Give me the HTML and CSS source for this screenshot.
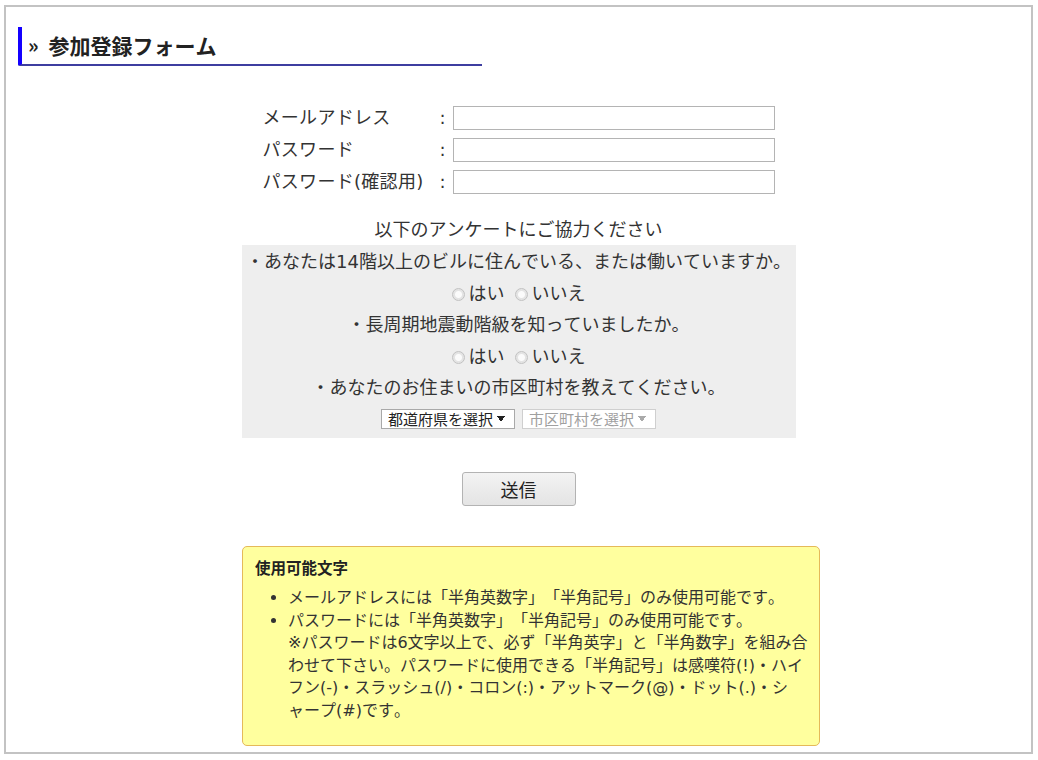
FILE: index.html
```html
<!DOCTYPE html>
<html lang="ja">
<head>
<meta charset="utf-8">
<title>参加登録フォーム</title>
<link rel="stylesheet" href="styles.css">
</head>
<body>
<div class="frame">
  <h2 class="heading"><span class="quote">»</span>参加登録フォーム</h2>

  <form class="form">
    <div class="fields">
      <label class="label" for="email">メールアドレス</label><span class="colon">:</span><input class="text" id="email" type="text">
      <label class="label" for="pw">パスワード</label><span class="colon">:</span><input class="text" id="pw" type="password">
      <label class="label" for="pw2">パスワード(確認用)</label><span class="colon">:</span><input class="text" id="pw2" type="password">
    </div>

    <p class="survey-title">以下のアンケートにご協力ください</p>
    <div class="survey">
      <p class="line">・あなたは14階以上のビルに住んでいる、または働いていますか。</p>
      <p class="line"><label class="opt"><input class="radio" type="radio" name="q1">はい</label><label class="opt"><input class="radio" type="radio" name="q1">いいえ</label></p>
      <p class="line">・長周期地震動階級を知っていましたか。</p>
      <p class="line"><label class="opt"><input class="radio" type="radio" name="q2">はい</label><label class="opt"><input class="radio" type="radio" name="q2">いいえ</label></p>
      <p class="line">・あなたのお住まいの市区町村を教えてください。</p>
      <p class="line selects">
        <select class="select"><option>都道府県を選択</option></select>
        <select class="select disabled" disabled><option>市区町村を選択</option></select>
      </p>
    </div>

    <div class="actions"><button class="submit" type="button">送信</button></div>
  </form>

  <div class="note">
    <p class="note-title">使用可能文字</p>
    <ul class="note-list">
      <li>メールアドレスには「半角英数字」「半角記号」のみ使用可能です。</li>
      <li>パスワードには「半角英数字」「半角記号」のみ使用可能です。<br>※パスワードは6文字以上で、必ず「半角英字」と「半角数字」を組み合<br>わせて下さい。パスワードに使用できる「半角記号」は感嘆符(!)・ハイ<br>フン(-)・スラッシュ(/)・コロン(:)・アットマーク(@)・ドット(.)・シ<br>ャープ(#)です。</li>
    </ul>
  </div>
</div>
</body>
</html>
```

FILE: styles.css
```css
* { box-sizing: border-box; }

html, body {
  margin: 0;
  padding: 0;
  background: #fff;
}

body {
  font-family: "DejaVu Sans", "Noto Sans CJK JP", sans-serif;
  color: #333;
  text-spacing-trim: space-all;
  font-kerning: none;
  font-feature-settings: "chws" 0, "halt" 0, "palt" 0, "kern" 0;
}

.frame {
  margin: 5px 5px 6px 4px;
  height: 749px;
  border: 2px solid #c3c3c3;
  display: flex;
  flex-direction: column;
}

.heading {
  margin: 20px 0 0 12px;
  width: 464px;
  height: 39px;
  border-left: 4px solid #1400ff;
  border-bottom: 2px solid #3e3ea0;
  border-bottom-left-radius: 2px;
  padding: 0 0 2px 6px;
  font-family: "Noto Sans CJK JP", sans-serif;
  font-size: 21px;
  font-weight: bold;
  line-height: 36px;
  color: #222;
  display: flex;
  align-items: center;
}

.quote {
  font-size: 20px;
  margin-right: 10px;
}

.form {
  display: flex;
  flex-direction: column;
  align-items: center;
  margin-top: 40px;
}

.fields {
  display: grid;
  grid-template-columns: 177px 13px 322px;
  row-gap: 8px;
  align-items: center;
  font-size: 18px;
  line-height: 24px;
}

.label { color: #333; letter-spacing: 0.3px; }
.colon { color: #333; }

.text {
  width: 322px;
  height: 24px;
  border: 1px solid #b4b4b4;
  border-radius: 0;
  padding: 0 4px;
  margin: 0;
  font: inherit;
}

.survey-title {
  margin: 20px 0 0;
  font-size: 18px;
  line-height: 31px;
  text-align: center;
}

.survey {
  width: 554px;
  background: #eeeeee;
  padding: 1px 0 3px;
  text-align: center;
  font-size: 18px;
}

.line {
  margin: 0;
  line-height: 31.5px;
  height: 31.5px;
  white-space: nowrap;
}

.opt {
  display: inline-flex;
  align-items: center;
  margin: 0 5px;
}

.radio {
  appearance: none;
  -webkit-appearance: none;
  flex: 0 0 13px;
  width: 13px;
  height: 13px;
  margin: 0 4px 0 0;
  border: 1px solid #c2c2c2;
  border-radius: 50%;
  background: radial-gradient(circle, #fbfbfb 0 3px, #e4e4e4 4px);
  position: relative;
  top: 1px;
}

.selects {
  display: flex;
  justify-content: center;
  align-items: center;
  gap: 7px;
}

.select {
  appearance: none;
  -webkit-appearance: none;
  width: 134px;
  height: 20px;
  border: 1px solid #a9a9a9;
  border-radius: 0;
  background-color: #fff;
  background-image:
    linear-gradient(to top right, transparent 50%, #222 50%),
    linear-gradient(to top left, transparent 50%, #222 50%);
  background-size: 4px 6px, 4px 6px;
  background-position: 115px 6px, 119px 6px;
  background-repeat: no-repeat;
  padding: 0 0 0 6px;
  margin: 0;
  font-family: "Noto Sans CJK JP", sans-serif;
  font-size: 15px;
  line-height: 18px;
  color: #222;
}

.select.disabled {
  border-color: #cfcfcf;
  color: #a0a0a0;
  opacity: 1;
  background-image:
    linear-gradient(to top right, transparent 50%, #aaa 50%),
    linear-gradient(to top left, transparent 50%, #aaa 50%);
}

.actions {
  margin-top: 34px;
}

.submit {
  width: 114px;
  height: 34px;
  border: 1px solid #b3b3b3;
  border-radius: 3px;
  background: linear-gradient(#f3f3f3, #e4e4e4);
  font-family: "Noto Sans CJK JP", sans-serif;
  font-size: 18px;
  color: #222;
  padding: 0;
}

.note {
  margin: 40px 0 0 236px;
  width: 578px;
  height: 200px;
  background: #ffff9e;
  border: 1px solid #e5b95a;
  border-radius: 5px;
  padding: 9px 2px 0 12px;
}

.note-title {
  margin: 0;
  font-family: "Noto Sans CJK JP", sans-serif;
  font-size: 15.5px;
  font-weight: bold;
  line-height: 22px;
  color: #222;
}

.note-list {
  margin: 9px 0 0;
  padding-left: 33px;
  font-size: 16px;
  line-height: 22.6px;
  color: #333;
  white-space: nowrap;
}
```
